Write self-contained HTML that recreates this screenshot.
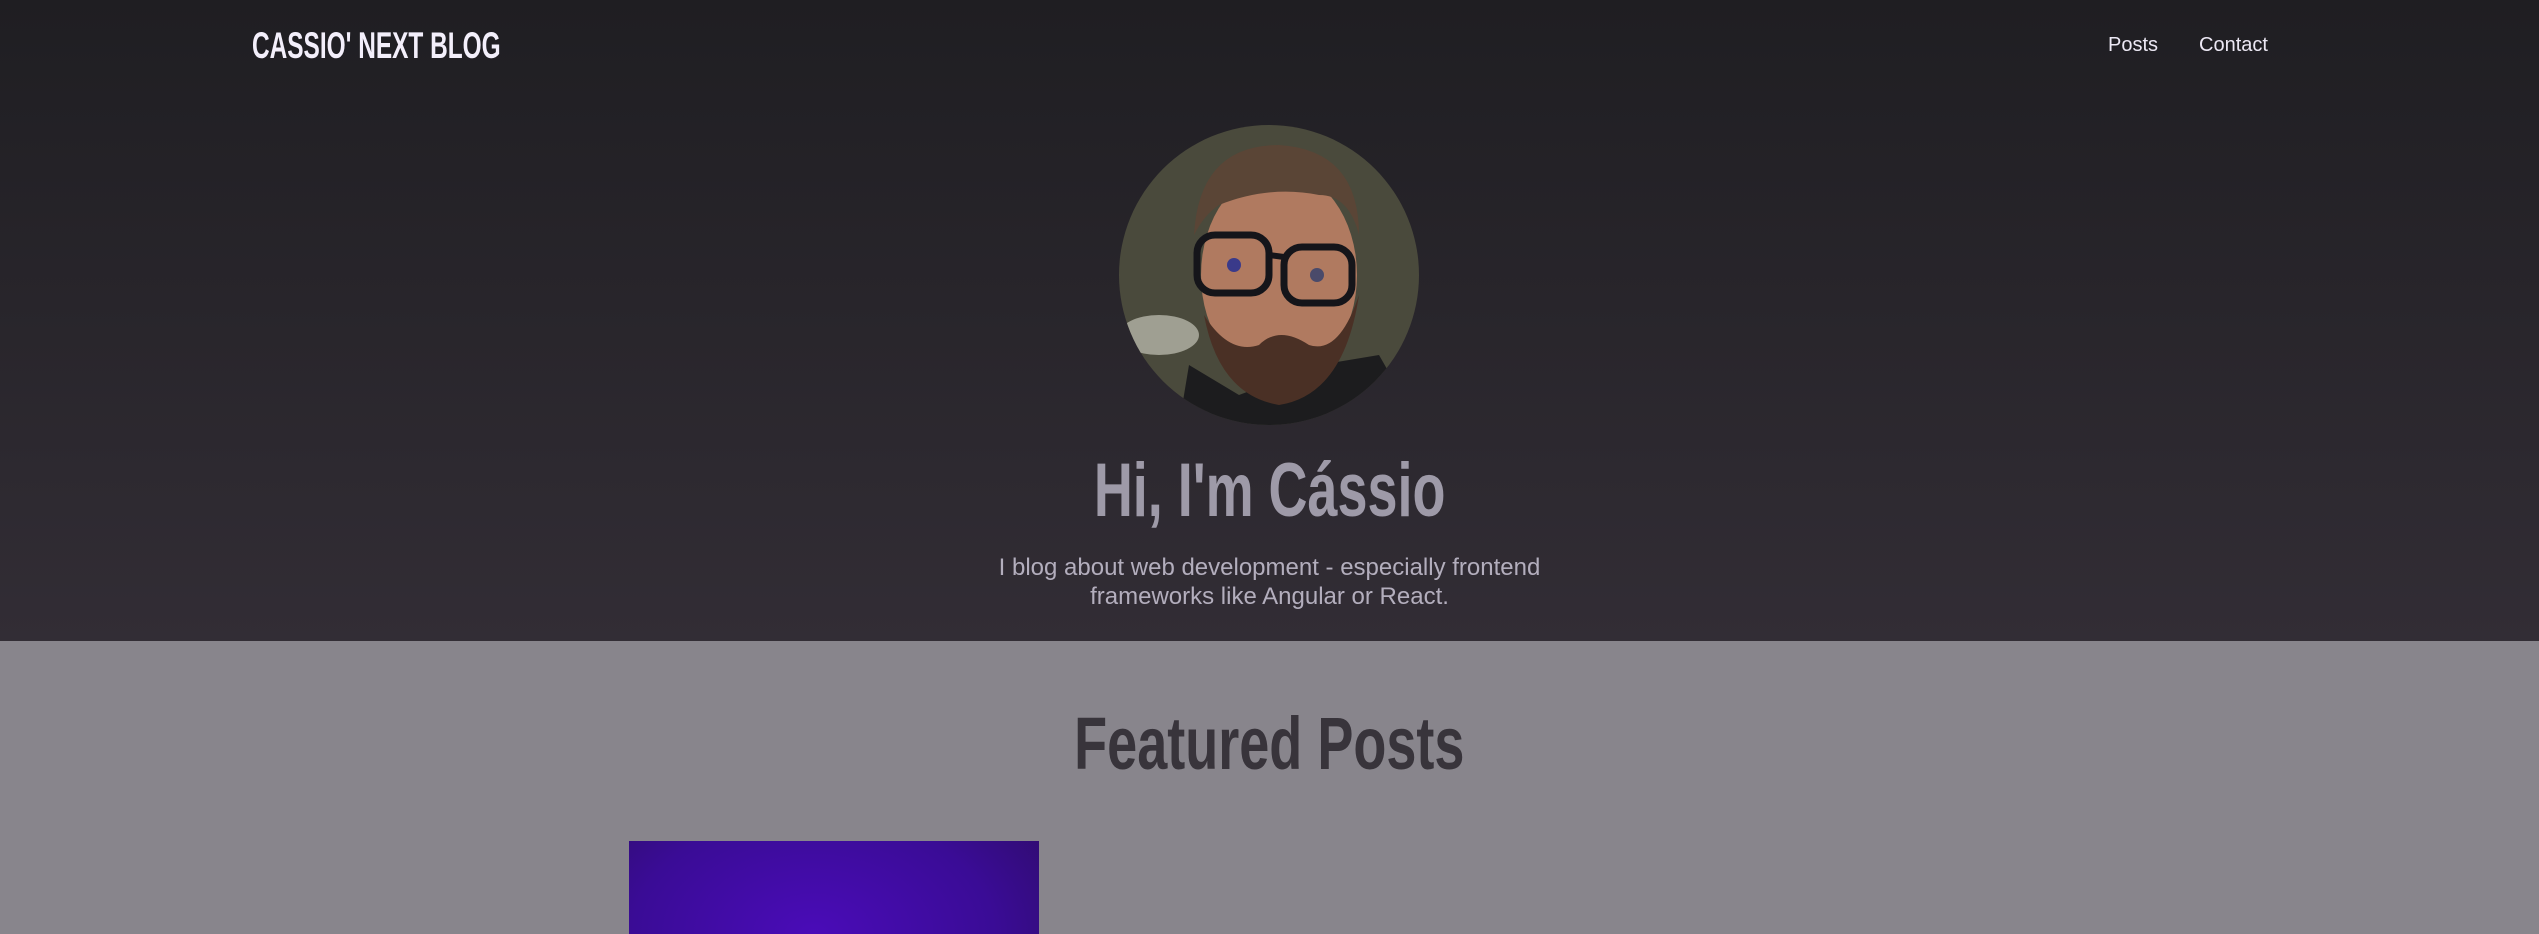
<!DOCTYPE html>
<html><head><meta charset="utf-8"><style>
html,body{margin:0;padding:0;width:2539px;height:934px;overflow:hidden;font-family:"Liberation Sans",sans-serif}
.hero{position:absolute;left:0;top:0;width:2539px;height:641px;background:linear-gradient(#1f1e22,#322d35)}
.logo{position:absolute;left:252px;top:25px;font-weight:bold;font-size:37px;color:#f3effb;white-space:nowrap;transform:scaleX(0.66);transform-origin:0 0}
.nav{position:absolute;top:34px;font-size:20px;color:#ece8f4}
.av{position:absolute;left:1119px;top:125px;width:300px;height:300px;border-radius:50%;overflow:hidden}
.c{position:absolute;left:0;width:2539px;text-align:center}
.c span{display:inline-block;white-space:nowrap}
h1{margin:0;top:447px;font-weight:bold;font-size:76px;color:#9e9aa8}
h1 span{transform:scaleX(0.71)}
.sub{top:553px;font-size:24px;line-height:29px;color:#b3aebd}
.feat{position:absolute;left:0;top:641px;width:2539px;height:293px;background:#88858c}
h2{margin:0;top:60px;font-weight:bold;font-size:74px;color:#38343b}
h2 span{transform:scaleX(0.73)}
.card{position:absolute;left:629px;top:200px;width:410px;height:93px;background:radial-gradient(ellipse 300px 200px at 45% 100%,#4a0cb8,#3a0c96 60%,#2e0b68)}
</style></head><body>
<div class="hero">
<div class="logo">CASSIO' NEXT BLOG</div>
<div class="nav" style="left:2108px">Posts</div>
<div class="nav" style="left:2199px">Contact</div>
<div class="av">
<svg width="300" height="300" viewBox="0 0 300 300">
<rect width="300" height="300" fill="#4a4a3c"/>
<ellipse cx="40" cy="210" rx="40" ry="20" fill="#d8d8cc" opacity=".6"/>
<path d="M60 300 L70 240 L120 270 L200 240 L260 230 L300 300Z" fill="#1c1c1e"/>
<ellipse cx="160" cy="150" rx="78" ry="105" fill="#b07a60"/>
<path d="M75 110 Q80 20 160 20 Q240 25 240 110 Q230 70 200 70 Q150 60 100 80 Q85 90 75 110Z" fill="#5a4536"/>
<path d="M85 190 Q100 270 160 280 Q225 270 240 170 Q220 230 190 220 Q160 200 140 220 Q110 230 85 190Z" fill="#4a3025"/>
<rect x="78" y="110" width="72" height="58" rx="18" fill="none" stroke="#15151a" stroke-width="7"/>
<rect x="165" y="122" width="68" height="56" rx="18" fill="none" stroke="#15151a" stroke-width="7"/>
<line x1="150" y1="130" x2="165" y2="132" stroke="#15151a" stroke-width="6"/>
<circle cx="115" cy="140" r="7" fill="#3a3a8a"/><circle cx="198" cy="150" r="7" fill="#4a4a6a"/>
</svg></div>
<h1 class="c"><span>Hi, I'm Cássio</span></h1>
<div class="c sub">I blog about web development - especially frontend<br>frameworks like Angular or React.</div>
</div>
<div class="feat"><h2 class="c"><span>Featured Posts</span></h2><div class="card"></div></div>
</body></html>
